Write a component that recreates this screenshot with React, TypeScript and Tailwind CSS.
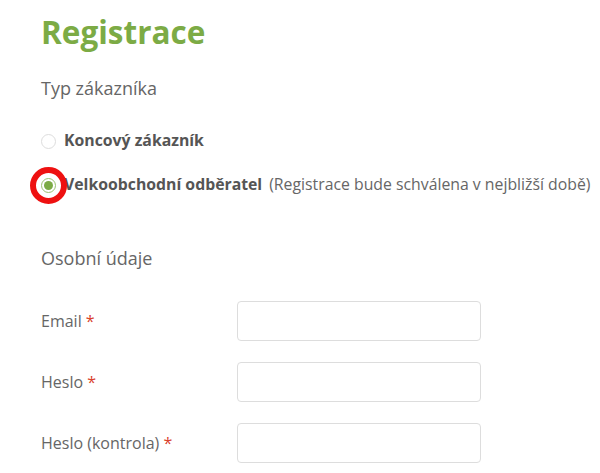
export default function App() {
    const fields = ["Email", "Heslo", "Heslo (kontrola)"]
    return (
        <main className="bg-white w-[600px] h-[473px] overflow-hidden pl-[41px] pt-[10px] font-['Open_Sans',sans-serif] text-[#555]">
            <h1 className="text-[31.5px] font-bold text-[#7cab45] leading-[44px]">Registrace</h1>
            <h2 className="mt-[22px] text-[18px] text-[#666] leading-[24px]">Typ zákazníka</h2>
            <div className="mt-[30px] space-y-[22px]">
                <label className="flex items-center h-[22px]">
                    <span className="w-[15px] h-[15px] rounded-full border border-[#ddd] bg-white"></span>
                    <span className="ml-[8px] text-[15.8px] font-bold text-[#555]">Koncový zákazník</span>
                </label>
                <label className="flex items-center h-[22px]">
                    <span className="relative w-[15px] h-[15px]">
                        <span className="absolute -left-[11px] -top-[11px] w-[37px] h-[37px] rounded-full border-[6px] border-[#ee1111]"></span>
                        <span className="absolute inset-0 rounded-full border border-[#9ac070] bg-white flex items-center justify-center">
                            <span className="w-[9px] h-[9px] rounded-full bg-[#7cab45]"></span>
                        </span>
                    </span>
                    <span className="ml-[8px] text-[15.8px] font-bold text-[#555]">Velkoobchodní odběratel</span>
                    <span className="ml-[7px] text-[15.8px] text-[#666]">(Registrace bude schválena v nejbližší době)</span>
                </label>
            </div>
            <h2 className="mt-[50px] text-[18px] text-[#666] leading-[24px]">Osobní údaje</h2>
            <div className="mt-[31px] space-y-[21px]">
                {fields.map((f) => (
                    <div key={f} className="flex items-center h-[40px]">
                        <span className="w-[196px] text-[16px] text-[#666]">
                            {f} <span className="text-[#d9412c]">*</span>
                        </span>
                        <input className="w-[244px] h-[40px] rounded-[4px] border border-[#ddd] bg-white" />
                    </div>
                ))}
            </div>
        </main>
    )
}
